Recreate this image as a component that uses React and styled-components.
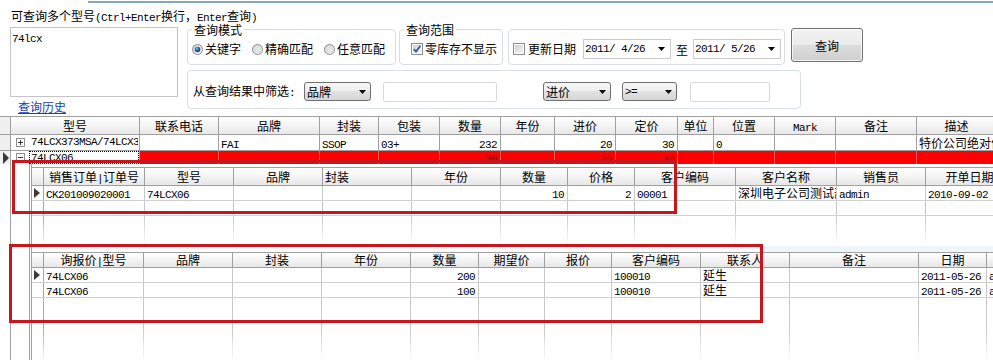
import React from 'react';
import styled, { createGlobalStyle } from 'styled-components';

const Global = createGlobalStyle`
  html, body { margin: 0; padding: 0; background: #fff; }
  body {
    font-family: "Noto Sans CJK SC", "Noto Sans", sans-serif;
    font-size: 12px;
    color: #000;
    overflow: hidden;
  }
  * { box-sizing: border-box; }
`;

/* ---------- text helper: ASCII runs in a narrow mono font ---------- */
const AsciiRun = styled.span`
  font-family: "Liberation Mono", "DejaVu Sans Mono", monospace;
  font-size: 11px;
  letter-spacing: -0.6px;
`;
const ASCII_SPLIT = /([\x20-\x7e]+)/;
const ASCII_ONLY = /^[\x20-\x7e]+$/;
function Txt({ children }) {
  const s = children == null ? '' : String(children);
  return s
    .split(ASCII_SPLIT)
    .filter(Boolean)
    .map((p, i) =>
      ASCII_ONLY.test(p) ? <AsciiRun key={i}>{p}</AsciiRun> : <React.Fragment key={i}>{p}</React.Fragment>
    );
}

/* ---------- icons ---------- */
function RadioIcon({ on }) {
  return (
    <svg width="11" height="11" viewBox="0 0 11 11">
      <defs>
        <linearGradient id="rad-ring" x1="0" y1="0" x2="1" y2="1">
          <stop offset="0" stopColor="#d4d4d4" />
          <stop offset="1" stopColor="#fafafa" />
        </linearGradient>
        <radialGradient id="rad-dot" cx="40%" cy="35%" r="70%">
          <stop offset="0" stopColor="#8cc4f2" />
          <stop offset="0.45" stopColor="#2a6db5" />
          <stop offset="1" stopColor="#0c3566" />
        </radialGradient>
      </defs>
      <circle cx="5.5" cy="5.5" r="5" fill="url(#rad-ring)" stroke="#8c8c8c" strokeWidth="1" />
      {on ? (
        <circle cx="5.5" cy="5.5" r="2.8" fill="url(#rad-dot)" />
      ) : (
        <circle cx="5.5" cy="5.5" r="3" fill="#e6e6e6" stroke="#d0d0d0" strokeWidth="0.6" />
      )}
    </svg>
  );
}

function CheckIcon({ on }) {
  return (
    <svg width="12" height="12" viewBox="0 0 12 12">
      <defs>
        <linearGradient id="chk-in" x1="0" y1="0" x2="1" y2="1">
          <stop offset="0" stopColor="#cfcfcf" />
          <stop offset="1" stopColor="#f7f7f7" />
        </linearGradient>
      </defs>
      <rect x="0.5" y="0.5" width="11" height="11" fill="#fff" stroke="#8e8f8f" />
      <rect x="2" y="2" width="8" height="8" fill="url(#chk-in)" />
      {on && <path d="M2.8 6.2 L5 8.6 L9.4 2.8" fill="none" stroke="#3a5a9e" strokeWidth="1.8" />}
    </svg>
  );
}

function DropArrow() {
  return (
    <svg width="7" height="4" viewBox="0 0 7 4">
      <polygon points="0,0 7,0 3.5,4" fill="#000" />
    </svg>
  );
}

function TreeBox({ open }) {
  return (
    <svg width="9" height="9" viewBox="0 0 9 9" style={{ flex: 'none' }}>
      <rect x="0.5" y="0.5" width="8" height="8" fill="#fff" stroke="#8f8f8f" />
      <path d="M2 4.5 H7" stroke="#333" strokeWidth="1" />
      {!open && <path d="M4.5 2 V7" stroke="#333" strokeWidth="1" />}
    </svg>
  );
}

function RowPointer({ h = 11 }) {
  return (
    <svg width="6" height={h} viewBox={`0 0 6 ${h}`}>
      <polygon points={`0,0 6,${h / 2} 0,${h}`} fill="#3a3a3a" />
    </svg>
  );
}

/* ---------- page ---------- */
const Page = styled.div`
  position: relative;
  width: 993px;
  height: 360px;
  overflow: hidden;
`;

const TopRule = styled.div`
  margin: 1px 0 0 88px;
  height: 2px;
  background: #86a8bb;
`;

const Title = styled.div`
  height: 24px;
  padding: 5px 0 0 11px;
  line-height: 16px;
  white-space: nowrap;
`;

const Panel = styled.div`
  display: flex;
  height: 89px;
  padding-left: 10px;
`;

const LeftCol = styled.div`
  flex: none;
  width: 168px;
`;

const MultiInput = styled.div`
  height: 70px;
  border: 1px solid #c4c4c4;
  padding: 3px 1px;
  line-height: 12px;
`;

const HistoryLink = styled.a`
  display: inline-block;
  margin: 3px 0 0 8px;
  color: #1b3fb0;
  text-decoration: underline;
  line-height: 14px;
  cursor: pointer;
`;

const RightCol = styled.div`
  margin-left: 9px;
  padding-top: 2px;
  display: flex;
  flex-direction: column;
  gap: 5px;
`;

const OptionRow = styled.div`
  display: flex;
  align-items: flex-start;
`;

const GroupBox = styled.div`
  position: relative;
  flex: none;
  width: ${(p) => p.$w}px;
  height: ${(p) => p.$h || 36}px;
  margin-right: ${(p) => p.$mr || 0}px;
  border: 1px solid #d5dfe5;
  border-radius: 4px;
  display: flex;
  align-items: center;
  gap: ${(p) => p.$gap || 0}px;
  padding: ${(p) => p.$pt ?? 4}px 0 0 ${(p) => p.$pl ?? 4}px;
  white-space: nowrap;
`;

const Legend = styled.span`
  position: absolute;
  top: -7px;
  left: 4px;
  padding: 0 2px;
  background: #fff;
  line-height: 14px;
`;

const Choice = styled.label`
  display: flex;
  align-items: center;
  gap: ${(p) => p.$gap ?? 2}px;
  line-height: 14px;
`;

const DatePicker = styled.div`
  flex: none;
  display: flex;
  align-items: center;
  justify-content: space-between;
  width: 88px;
  height: 20px;
  margin-left: ${(p) => p.$ml || 0}px;
  border: 1px solid #cbcbcb;
  padding: 0 5px 0 1px;
  background: #fff;
`;

const ToWord = styled.span`
  margin-left: 5px;
`;

const QueryButton = styled.button`
  flex: none;
  width: 72px;
  height: 34px;
  margin-top: -1px;
  padding: 0;
  border: 1px solid #707070;
  border-radius: 3px;
  background: linear-gradient(#f2f2f2, #ebebeb 50%, #dddddd 50%, #cfcfcf);
  box-shadow: inset 0 0 0 1px rgba(255, 255, 255, 0.75);
  font-family: inherit;
  font-size: 12px;
  color: #000;
`;

const FilterLabel = styled.span`
  line-height: 14px;
`;

const Combo = styled.div`
  flex: none;
  display: flex;
  align-items: center;
  justify-content: space-between;
  width: ${(p) => p.$w}px;
  height: 19px;
  margin-left: ${(p) => p.$ml || 0}px;
  border: 1px solid #707070;
  border-radius: 3px;
  background: linear-gradient(#f6f6f6, #eeeeee 50%, #e2e2e2 50%, #d6d6d6);
  padding: 0 4px 0 2px;
  line-height: 14px;
`;

const TextBox = styled.div`
  flex: none;
  width: ${(p) => p.$w}px;
  height: 20px;
  margin-left: ${(p) => p.$ml || 0}px;
  border: 1px solid #dadada;
  border-radius: 2px;
  background: #fff;
`;

/* ---------- main grid ---------- */
const GridHead = styled.div`
  display: flex;
  height: ${(p) => p.$h}px;
  line-height: ${(p) => p.$h - 2}px;
  border-top: 1px solid #a0a0a0;
  border-bottom: 1px solid #a0a0a0;
  background: linear-gradient(#ffffff, #f4f4f4 50%, #e7e7e7);
  white-space: nowrap;
`;

const HeadCell = styled.div`
  flex: none;
  width: ${(p) => p.$w}px;
  border-right: 1px solid #a0a0a0;
  text-align: ${(p) => p.$align || 'center'};
  padding: 0 2px;
  overflow: hidden;
`;

const MainRow = styled.div`
  display: flex;
  height: ${(p) => p.$h}px;
  line-height: ${(p) => p.$h - 1}px;
  border-bottom: ${(p) => (p.$sep ? '1px solid #a0a0a0' : 'none')};
  white-space: nowrap;
`;

const RowMark = styled.div`
  flex: none;
  width: 11px;
  border-right: 1px solid #a0a0a0;
  background: ${(p) => (p.$plain ? '#fff' : '#f0f0f0')};
  display: flex;
  align-items: center;
  padding-left: 3px;
`;

const TreeCell = styled.div`
  flex: none;
  width: 129px;
  border-right: 1px solid #a0a0a0;
  display: flex;
  align-items: center;
  gap: 4px;
  padding-left: 5px;
  background: #fff;
  overflow: hidden;
`;

const TreeLabel = styled.div`
  flex: 1;
  align-self: stretch;
  display: flex;
  align-items: center;
  border: 1px ${(p) => (p.$focus ? 'dotted #000' : 'solid transparent')};
  padding-left: 1px;
  overflow: hidden;
`;

const DataCell = styled.div`
  flex: none;
  width: ${(p) => p.$w}px;
  border-right: 1px solid ${(p) => (p.$hot ? 'rgba(255,255,255,0.35)' : '#a0a0a0')};
  background: ${(p) => (p.$hot ? '#ff0000' : '#fff')};
  color: ${(p) => (p.$hot ? '#8a0000' : '#000')};
  text-align: ${(p) => p.$align || 'left'};
  padding: 0 3px 0 2px;
  overflow: hidden;
`;

/* ---------- detail area ---------- */
const Detail = styled.div`
  display: flex;
  height: 197px;
`;

const DetailGutter = styled.div`
  flex: none;
  width: 11px;
  border-right: 1px solid #a0a0a0;
`;

const DetailIndent = styled.div`
  flex: none;
  width: 18px;
`;

const DetailPanel = styled.div`
  flex: 1;
  min-width: 0;
  border-left: 3px double #a0a0a0;
  display: flex;
  flex-direction: column;
  overflow: hidden;
`;

const SubSection = styled.div`
  flex: none;
  padding-top: ${(p) => p.$top}px;
  background: ${(p) => p.$band || '#fff'};
`;

const SubHeadCorner = styled.div`
  flex: none;
  width: 12px;
  border-right: 1px solid #a0a0a0;
`;

const SubRow = styled.div`
  display: flex;
  height: 15px;
  line-height: 14px;
  border-bottom: 1px solid #d0d0d0;
  white-space: nowrap;
  background: #fff;
`;

const SubRowHead = styled.div`
  flex: none;
  width: 12px;
  border-right: 1px solid #a8a8a8;
  display: flex;
  align-items: center;
  padding-left: 2px;
`;

const SubCell = styled.div`
  flex: none;
  width: ${(p) => p.$w}px;
  border-right: 1px solid #c8c8c8;
  text-align: ${(p) => p.$align || 'left'};
  padding: 0 3px 0 2px;
  overflow: hidden;
`;

const FillRow = styled.div`
  display: flex;
  height: ${(p) => p.$h}px;
  background: #fff;
`;

const FillCell = styled.div`
  flex: none;
  width: ${(p) => p.$w}px;
  border-right: 1px solid transparent;
  border-image: linear-gradient(${(p) => p.$c}, ${(p) => p.$c} ${(p) => p.$solid}%, rgba(255, 255, 255, 0)) 1;
`;

const Callout = styled.div`
  position: absolute;
  left: ${(p) => p.$x}px;
  top: ${(p) => p.$y}px;
  width: ${(p) => p.$w}px;
  height: ${(p) => p.$h}px;
  border: 3px solid #c8161e;
  pointer-events: none;
`;

/* ---------- data ---------- */
const mainCols = [
  { w: 129, t: '型号' },
  { w: 79, t: '联系电话' },
  { w: 101, t: '品牌' },
  { w: 59, t: '封装' },
  { w: 61, t: '包装' },
  { w: 61, t: '数量', a: 'right' },
  { w: 54, t: '年份' },
  { w: 61, t: '进价', a: 'right' },
  { w: 62, t: '定价', a: 'right' },
  { w: 36, t: '单位' },
  { w: 61, t: '位置' },
  { w: 61, t: 'Mark' },
  { w: 81, t: '备注' },
  { w: 80, t: '描述' },
];

const mainRows = [
  { tree: '74LCX373MSA/74LCX3', cells: ['', 'FAI', 'SSOP', '03+', '232', '', '20', '30', '', '0', '', '', '特价公司绝对优势'] },
  { tree: '74LCX06', open: true, hot: true, cells: ['', '', '', '', '30', '', '20', '30', '', '', '', '', ''] },
];

const orderCols = [
  { w: 101, t: '销售订单|订单号' },
  { w: 89, t: '型号' },
  { w: 89, t: '品牌' },
  { w: 89, t: '封装', ha: 'left' },
  { w: 89, t: '年份' },
  { w: 67, t: '数量', a: 'right' },
  { w: 67, t: '价格', a: 'right' },
  { w: 101, t: '客户编码' },
  { w: 101, t: '客户名称' },
  { w: 89, t: '销售员' },
  { w: 88, t: '开单日期' },
];
const orderRows = [
  ['CK201009020001', '74LCX06', '', '', '', '10', '2', '00001', '深圳电子公司测试部', 'admin', '2010-09-02'],
  null,
];

const quoteCols = [
  { w: 100, t: '询报价|型号' },
  { w: 89, t: '品牌' },
  { w: 89, t: '封装' },
  { w: 89, t: '年份' },
  { w: 68, t: '数量', a: 'right' },
  { w: 66, t: '期望价' },
  { w: 67, t: '报价' },
  { w: 89, t: '客户编码' },
  { w: 89, t: '联系人' },
  { w: 129, t: '备注' },
  { w: 68, t: '日期' },
  { w: 60, t: '' },
];
const quoteRows = [
  ['74LCX06', '', '', '', '200', '', '', '100010', '延生', '', '2011-05-26', 'admin'],
  ['74LCX06', '', '', '', '100', '', '', '100010', '延生', '', '2011-05-26', 'admin'],
];

function SubGrid({ cols, rows, headH, top, band, fillH, solid, pointer }) {
  return (
    <SubSection $top={top} $band={band}>
      <GridHead $h={headH}>
        <SubHeadCorner />
        {cols.map((c, i) => (
          <HeadCell key={i} $w={c.w} $align={c.ha}>
            <Txt>{c.t}</Txt>
          </HeadCell>
        ))}
      </GridHead>
      {rows.map((r, ri) => (
        <SubRow key={ri}>
          <SubRowHead>{ri === 0 && pointer && <RowPointer h={10} />}</SubRowHead>
          {cols.map((c, i) => (
            <SubCell key={i} $w={c.w} $align={c.a}>
              <Txt>{r ? r[i] : ''}</Txt>
            </SubCell>
          ))}
        </SubRow>
      ))}
      <FillRow $h={fillH}>
        <FillCell $w={12} $c="#a8a8a8" $solid={solid} />
        {cols.map((c, i) => (
          <FillCell key={i} $w={c.w} $c="#c8c8c8" $solid={solid} />
        ))}
      </FillRow>
    </SubSection>
  );
}

export default function App() {
  return (
    <Page>
      <Global />
      <TopRule />
      <Title>
        <Txt>可查询多个型号(Ctrl+Enter换行，Enter查询)</Txt>
      </Title>

      <Panel>
        <LeftCol>
          <MultiInput>
            <Txt>74lcx</Txt>
          </MultiInput>
          <HistoryLink>查询历史</HistoryLink>
        </LeftCol>

        <RightCol>
          <OptionRow>
            <GroupBox $w={209} $mr={3} $pl={4} $gap={11}>
              <Legend>查询模式</Legend>
              <Choice>
                <RadioIcon on />
                关键字
              </Choice>
              <Choice>
                <RadioIcon />
                精确匹配
              </Choice>
              <Choice>
                <RadioIcon />
                任意匹配
              </Choice>
            </GroupBox>

            <GroupBox $w={104} $mr={5} $pl={11}>
              <Legend>查询范围</Legend>
              <Choice>
                <CheckIcon on />
                零库存不显示
              </Choice>
            </GroupBox>

            <GroupBox $w={277} $mr={6} $pl={4}>
              <Choice $gap={3}>
                <CheckIcon />
                更新日期
              </Choice>
              <DatePicker $ml={7}>
                <Txt>2011/ 4/26</Txt>
                <DropArrow />
              </DatePicker>
              <ToWord>至</ToWord>
              <DatePicker $ml={5}>
                <Txt>2011/ 5/26</Txt>
                <DropArrow />
              </DatePicker>
            </GroupBox>

            <QueryButton>查询</QueryButton>
          </OptionRow>

          <GroupBox $w={614} $h={39} $pl={5} $pt={4}>
            <FilterLabel>
              <Txt>从查询结果中筛选:</Txt>
            </FilterLabel>
            <Combo $w={67} $ml={9}>
              品牌
              <DropArrow />
            </Combo>
            <TextBox $w={114} $ml={12} />
            <Combo $w={68} $ml={46}>
              进价
              <DropArrow />
            </Combo>
            <Combo $w={55} $ml={11}>
              <Txt>{'>='}</Txt>
              <DropArrow />
            </Combo>
            <TextBox $w={80} $ml={13} />
          </GroupBox>
        </RightCol>
      </Panel>

      <GridHead $h={19}>
        <RowMark />
        {mainCols.map((c, i) => (
          <HeadCell key={i} $w={c.w}>
            <Txt>{c.t}</Txt>
          </HeadCell>
        ))}
      </GridHead>

      {mainRows.map((r, ri) => (
        <MainRow key={ri} $h={r.hot ? 13 : 16} $sep={!r.hot}>
          <RowMark>{r.hot && <RowPointer h={12} />}</RowMark>
          <TreeCell>
            <TreeBox open={r.open} />
            <TreeLabel $focus={r.hot}>
              <Txt>{r.tree}</Txt>
            </TreeLabel>
          </TreeCell>
          {mainCols.slice(1).map((c, i) => (
            <DataCell key={i} $w={c.w} $align={c.a} $hot={r.hot}>
              <Txt>{r.cells[i]}</Txt>
            </DataCell>
          ))}
        </MainRow>
      ))}

      <Detail>
        <DetailGutter />
        <DetailIndent />
        <DetailPanel>
          <SubGrid cols={orderCols} rows={orderRows} headH={19} top={3} fillH={30} solid={0} pointer />
          <SubGrid
            cols={quoteCols}
            rows={quoteRows}
            headH={16}
            top={6}
            band="linear-gradient(90deg, #fff 731px, #eef6fc 731px)"
            fillH={64}
            solid={45}
            pointer
          />
        </DetailPanel>
      </Detail>

      <Callout $x={12} $y={160} $w={665} $h={54} />
      <Callout $x={9} $y={244} $w={754} $h={79} />
    </Page>
  );
}
